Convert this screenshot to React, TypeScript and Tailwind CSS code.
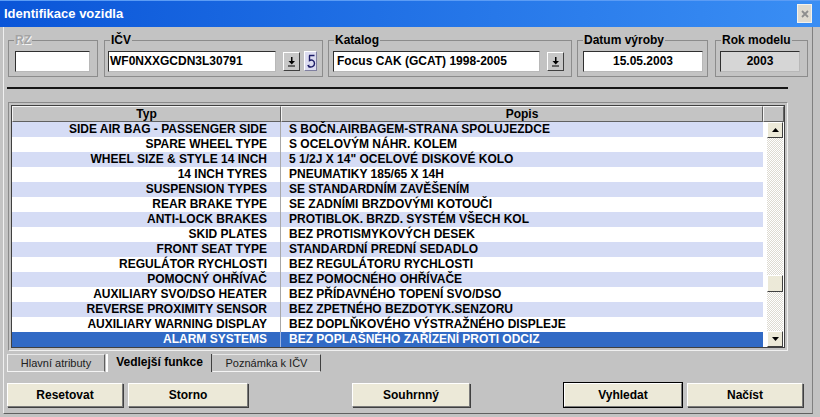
import React from 'react'

const rows: [string, string][] = [
  ['SIDE AIR BAG - PASSENGER SIDE', 'S BOČN.AIRBAGEM-STRANA SPOLUJEZDCE'],
  ['SPARE WHEEL TYPE', 'S OCELOVÝM NÁHR. KOLEM'],
  ['WHEEL SIZE & STYLE 14 INCH', '5 1/2J X 14" OCELOVÉ DISKOVÉ KOLO'],
  ['14 INCH TYRES', 'PNEUMATIKY 185/65 X 14H'],
  ['SUSPENSION TYPES', 'SE STANDARDNÍM ZAVĚŠENÍM'],
  ['REAR BRAKE TYPE', 'SE ZADNÍMI BRZDOVÝMI KOTOUČI'],
  ['ANTI-LOCK BRAKES', 'PROTIBLOK. BRZD. SYSTÉM VŠECH KOL'],
  ['SKID PLATES', 'BEZ PROTISMYKOVÝCH DESEK'],
  ['FRONT SEAT TYPE', 'STANDARDNÍ PREDNÍ SEDADLO'],
  ['REGULÁTOR RYCHLOSTI', 'BEZ REGULÁTORU RYCHLOSTI'],
  ['POMOCNÝ OHŘÍVAČ', 'BEZ POMOCNÉHO OHŘÍVAČE'],
  ['AUXILIARY SVO/DSO HEATER', 'BEZ PŘÍDAVNÉHO TOPENÍ SVO/DSO'],
  ['REVERSE PROXIMITY SENSOR', 'BEZ ZPETNÉHO BEZDOTYK.SENZORU'],
  ['AUXILIARY WARNING DISPLAY', 'BEZ DOPLŇKOVÉHO VÝSTRAŽNÉHO DISPLEJE'],
  ['ALARM SYSTEMS', 'BEZ POPLAŠNÉHO ZAŘÍZENÍ PROTI ODCIZ'],
]

const raised = 'border border-t-white border-l-white border-r-[#404040] border-b-[#404040]'
const sunken = 'border border-t-[#303030] border-l-[#303030] border-r-[#b8b8b8] border-b-[#b8b8b8]'

function DropBtn() {
  return (
    <div className={`w-[17px] h-[19px] mt-[1px] bg-[#c8c8c8] ${raised} flex items-center justify-center`}>
      <svg width="9" height="10" viewBox="0 0 9 10">
        <rect x="4" y="0" width="1.5" height="4" fill="#000" />
        <path d="M1.5 4H8L4.75 7.5Z" fill="#000" />
        <rect x="1" y="8.5" width="7" height="1" fill="#000" />
      </svg>
    </div>
  )
}

function UndoIcon() {
  return (
    <div className="w-[13px] h-[20px] bg-[#dcdcf0] border border-t-white border-l-white border-r-[#8080a0] border-b-[#8080a0] flex items-center justify-center">
      <svg width="10" height="16" viewBox="0 0 10 16">
        <path d="M3 2.5H8.5M3.5 2.5V7.5C5.5 6.5 8.5 7 8.5 10.5C8.5 14 5 14.5 2.5 13.5" fill="none" stroke="#1c1c66" strokeWidth="1.4" />
        <path d="M1 12.5L3.5 11.5L3 14.5Z" fill="#1c1c66" />
      </svg>
    </div>
  )
}

function Group({ label, className, children, disabled }: { label: string; className: string; children: React.ReactNode; disabled?: boolean }) {
  return (
    <fieldset className={`border border-[#8c8c8c] pb-[4px] ${className}`}>
      <legend className={`ml-[5px] px-[1px] text-[12px] font-bold leading-[14px] ${disabled ? 'text-[#a4a4a4] [text-shadow:1px_1px_0_#f4f4f4]' : 'text-black'}`}>
        {label}
      </legend>
      <div className="flex items-start mt-[4px]">{children}</div>
    </fieldset>
  )
}

function Arrow({ up }: { up?: boolean }) {
  return (
    <div className={`h-[16px] bg-[#ece9d8] ${raised} flex items-center justify-center`}>
      <svg width="7" height="4" viewBox="0 0 7 4">
        <path d={up ? 'M0 4H7L3.5 0Z' : 'M0 0H7L3.5 4Z'} fill="#000" />
      </svg>
    </div>
  )
}

function Btn({ label, className, def }: { label: string; className: string; def?: boolean }) {
  return (
    <div className={`${className} h-[24px] ${def ? 'outline outline-1 outline-black' : ''} bg-[#ece9d8] border border-t-white border-l-white border-r-[#7a7a7a] border-b-[#7a7a7a] shadow-[1px_1px_0_#404040] flex items-center justify-center text-[12px] font-bold`}>
      {label}
    </div>
  )
}

export default function App() {
  return (
    <div className="w-[820px] h-[417px] bg-[#c3c3c3] overflow-hidden flex flex-col font-['Liberation_Sans',Arial,sans-serif] text-black">
      {/* Title bar */}
      <div className="h-[27px] shrink-0 bg-linear-to-r from-[#0a55d8] to-[#3a8ef4] flex items-center justify-between pl-[4px] pr-[8px] shadow-[inset_0_1px_0_#5b9cf5]">
        <span className="text-white text-[13px] font-bold">Identifikace vozidla</span>
        <div className="w-[15px] h-[19px] bg-[#dedad0] border border-[#f4f2ec] flex items-center justify-center">
          <svg width="8" height="8" viewBox="0 0 8 8">
            <path d="M1 1L7 7M7 1L1 7" stroke="#8e8e8e" strokeWidth="1.8" />
          </svg>
        </div>
      </div>

      <div className="flex-1 px-[3px] pb-[3px]">
        <div className="h-full w-[810px] border-l border-l-[#f0f0f0] border-r border-r-[#808080] border-b border-b-[#606060] flex flex-col items-start">
          {/* Groups */}
          <div className="flex items-start pt-[6px]">
            <Group label="RZ" className="w-[90px] ml-[4px]" disabled>
              <div className={`ml-[6px] w-[75px] h-[21px] bg-white ${sunken}`} />
            </Group>
            <Group label="IČV" className="w-[219px] ml-[6px]">
              <div className={`ml-[3px] w-[168px] h-[21px] bg-white ${sunken} pl-[1px] text-[12px] font-bold leading-[19px]`}>
                WF0NXXGCDN3L30791
              </div>
              <div className="ml-[7px]"><DropBtn /></div>
              <div className="ml-[4px]"><UndoIcon /></div>
            </Group>
            <Group label="Katalog" className="w-[244px] ml-[5px]">
              <div className={`ml-[4px] w-[207px] h-[21px] bg-white ${sunken} pl-[3px] text-[12px] font-bold leading-[19px]`}>
                Focus CAK (GCAT) 1998-2005
              </div>
              <div className="ml-[7px]"><DropBtn /></div>
            </Group>
            <Group label="Datum výroby" className="w-[131px] ml-[5px]">
              <div className={`ml-[5px] w-[120px] h-[21px] bg-white ${sunken} text-center text-[12px] font-bold leading-[19px]`}>
                15.05.2003
              </div>
            </Group>
            <Group label="Rok modelu" className="w-[93px] ml-[7px]">
              <div className={`ml-[4px] w-[80px] h-[21px] bg-[#d6d6d6] ${sunken} text-center text-[12px] font-bold leading-[19px]`}>
                2003
              </div>
            </Group>
          </div>

          {/* Separator */}
          <div className="ml-[3px] mt-[10px] w-[781px] h-[2px] bg-[#151515]" />

          {/* Table */}
          <div className="ml-[4px] mt-[13px] w-[780px] border border-[#8a8a8a] border-r-[#f0f0f0] border-b-[#f0f0f0] p-[2px]">
            <div className="border border-[#404040] bg-white text-[12px] font-bold">
              <div className="flex h-[16px] bg-[#c4c4c4] leading-[14px]">
                <div className="w-[269px] text-center border border-t-[#f4f4f4] border-l-[#f4f4f4] border-r-[#606060] border-b-[#606060]">Typ</div>
                <div className="w-[482px] text-center border border-t-[#f4f4f4] border-l-[#f4f4f4] border-r-[#606060] border-b-[#606060]">Popis</div>
                <div className="flex-1 border border-t-[#f4f4f4] border-l-[#f4f4f4] border-r-[#606060] border-b-[#606060]" />
              </div>
              <div className="flex">
                <div className="w-[751px] flex flex-col">
                  {rows.map(([typ, popis], i) => {
                    const sel = i === rows.length - 1
                    const bg = sel ? 'bg-[#316ac5] text-white' : i % 2 === 0 ? 'bg-[#d5dcf5]' : 'bg-white'
                    return (
                      <div key={typ} className={`flex h-[15px] leading-[15px] whitespace-nowrap ${bg}`}>
                        <div className={`w-[269px] text-right pr-[13px] border-r ${sel ? 'border-[#9fb6e2]' : 'border-[#a8a8a8]'}`}>{typ}</div>
                        <div className="flex-1 pl-[8px]">{popis}</div>
                      </div>
                    )
                  })}
                </div>
                <div className="ml-[4px] w-[16px] flex flex-col">
                  <Arrow up />
                  <div className="flex-1 flex flex-col bg-[repeating-conic-gradient(#ffffff_0_25%,#dedbd2_0_50%)] bg-size-[2px_2px]">
                    <div className="h-[137px]" />
                    <div className={`h-[17px] bg-[#ece9d8] ${raised}`} />
                  </div>
                  <Arrow />
                </div>
              </div>
            </div>
          </div>

          {/* Tabs */}
          <div className="ml-[3px] mt-[3px] flex h-[18px] text-[11px] leading-[16px]">
            <div className="w-[98px] text-center border border-t-[#e8e8e8] border-l-[#f4f4f4] border-b-[#f4f4f4] border-r-[#606060] text-[#202020]">Hlavní atributy</div>
            <div className="ml-[1px] w-[106px] text-center border-l-2 border-l-white border-r border-r-[#404040] font-bold text-[12px]">Vedlejší funkce</div>
            <div className="w-[109px] text-center border border-t-[#e8e8e8] border-l-[#c3c3c3] border-b-[#f4f4f4] border-r-[#404040] text-[#202020]">Poznámka k IČV</div>
          </div>

          {/* Buttons */}
          <div className="ml-[3px] mt-[11px] flex">
            <Btn label="Resetovat" className="w-[116px]" />
            <Btn label="Storno" className="w-[120px] ml-[5px]" />
            <Btn label="Souhrnný" className="w-[118px] ml-[104px]" />
            <Btn label="Vyhledat" className="w-[118px] ml-[94px]" def />
            <Btn label="Načíst" className="w-[116px] ml-[5px]" />
          </div>
        </div>
      </div>
    </div>
  )
}
